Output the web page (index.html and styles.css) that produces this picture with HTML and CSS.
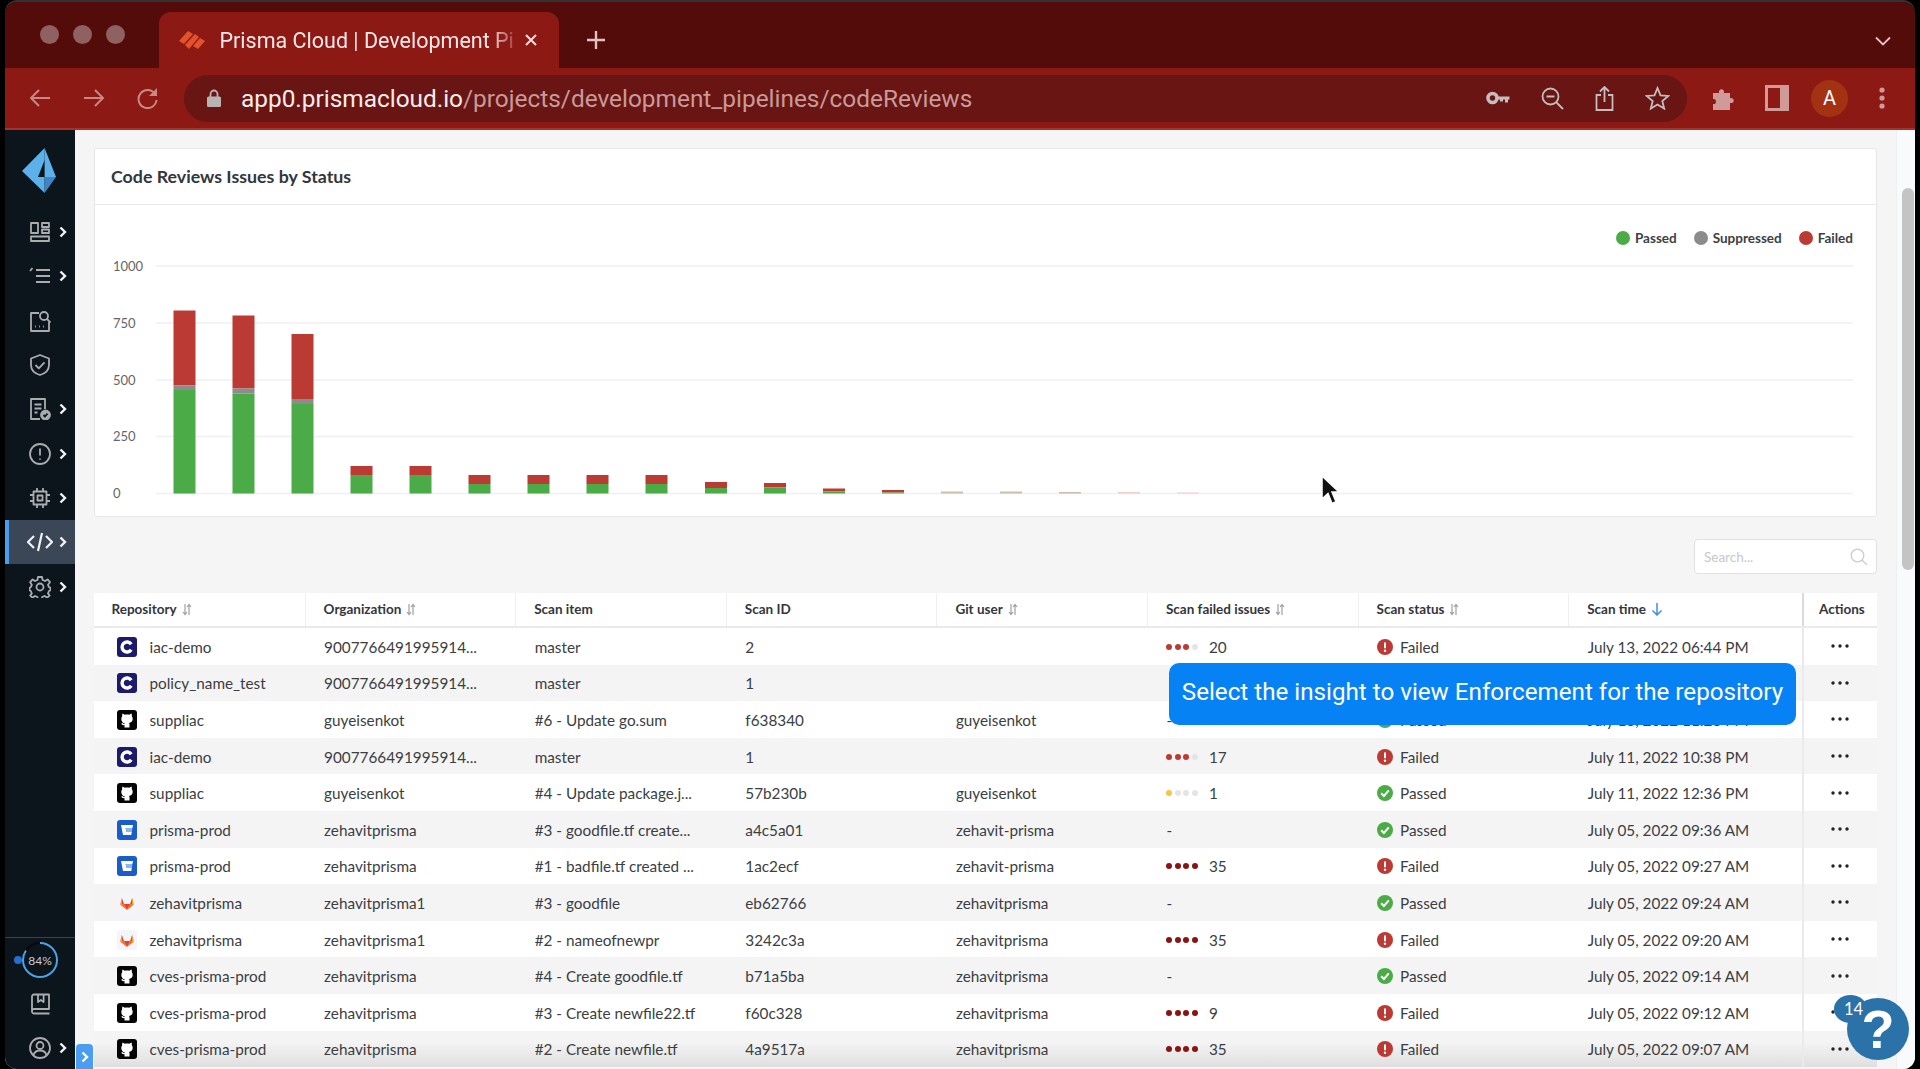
FILE: index.html
```html
<!DOCTYPE html>
<html lang="en">
<head>
  <meta charset="UTF-8" />
  <title>Prisma Cloud | Development Pipelines</title>
  <link rel="stylesheet" href="styles.css">
</head>
<body>
  <!-- shared icons -->
  <svg class="sprite" xmlns="http://www.w3.org/2000/svg">
    <symbol id="repo-c" viewBox="0 0 20 20">
      <rect width="20" height="20" rx="3" fill="#1d1a6c"/>
      <path d="M14.2 7.2a5 5 0 1 0 0 5.6" fill="none" stroke="#fff" stroke-width="3.4"/>
    </symbol>
    <symbol id="repo-gh" viewBox="0 0 20 20">
      <rect width="20" height="20" rx="3" fill="#050505"/>
      <path fill="#fff" d="M5.5 3.5l2.3 1.3c1.4-.4 3-.4 4.4 0l2.3-1.3c.4 1 .5 2 .3 2.8.6.7.9 1.5.9 2.5 0 2.6-1.6 3.9-3.7 4.2.4.4.5.9.5 1.5v3h-5v-2.400c-1.500.3-2.600-.2-3.200-1.600l1.400-.4c.4.7.9 1 1.800.8 0-.4.1-.7.3-.9C6 13.700 4.300 11.400 4.300 8.800c0-1 .3-1.800.9-2.500-.2-.8-.1-1.800.3-2.800z"/>
    </symbol>
    <symbol id="repo-bb" viewBox="0 0 20 20">
      <rect width="20" height="20" rx="3" fill="#1a5cc8"/>
      <path fill="#fff" d="M4 5h12l-.6 3H8.600l1 4h5.200l-.5 3H6z"/>
      <path fill="#8db8ee" d="M8.600 8h6.800l-.6 4H9.600z"/>
    </symbol>
    <symbol id="repo-gl" viewBox="0 0 20 20">
      <rect width="20" height="20" rx="3" fill="#f4f5fa"/>
      <path fill="#fca326" d="M3 11.500L4.800 5l2 6zM17 11.500L15.200 5l-2 6z"/>
      <path fill="#fc6d26" d="M3 11.500l7 5.500-3.200-6zM17 11.500l-7 5.500 3.200-6z"/>
      <path fill="#e24329" d="M10 17l-3.200-6h6.400zM4.800 5l2 6H5zM15.200 5l-2 6H15z"/>
    </symbol>
    <symbol id="st-fail" viewBox="0 0 16 16">
      <circle cx="8" cy="8" r="8" fill="#bb3a33"/>
      <rect x="7" y="3.200" width="2" height="6.300" rx="1" fill="#fff"/>
      <circle cx="8" cy="11.800" r="1.200" fill="#fff"/>
    </symbol>
    <symbol id="st-pass" viewBox="0 0 16 16">
      <circle cx="8" cy="8" r="8" fill="#4bab46"/>
      <path d="M4.200 8.300l2.700 2.700 4.900-5.600" fill="none" stroke="#fff" stroke-width="2"/>
    </symbol>
    <symbol id="sort" viewBox="0 0 10 13">
      <path d="M3 1v10M1 9l2 2.500L5 9M7 12V2M5 4l2-2.500L9 4" fill="none" stroke="#a0a0a0" stroke-width="1.200"/>
    </symbol>
    <symbol id="more" viewBox="0 0 18 4">
      <circle cx="2" cy="2" r="1.700" fill="#222"/><circle cx="9" cy="2" r="1.700" fill="#222"/><circle cx="16" cy="2" r="1.700" fill="#222"/>
    </symbol>
    <symbol id="chev" viewBox="0 0 8 12">
      <path d="M1.500 1.500L6 6l-4.500 4.500" fill="none" stroke="currentColor" stroke-width="2.400"/>
    </symbol>
  </svg>

  <div class="window">
    <!-- browser tab strip -->
    <div class="tabstrip">
      <div class="lights"><i></i><i></i><i></i></div>
      <div class="tab">
        <svg class="favicon" viewBox="0 0 28 20">
          <g fill="#e2532c"><path d="M1 11L10 1l5 3-9 10z"/><path d="M7 15L17 4l4 3-10 12z"/><path d="M15 16l7-8 5 3-7 8z"/></g>
        </svg>
        <span class="tab-title">Prisma Cloud | Development Pi</span>
        <svg class="tab-close" viewBox="0 0 14 14"><path d="M2 2l10 10M12 2L2 12" stroke="#f3dedd" stroke-width="2"/></svg>
      </div>
      <svg class="new-tab" viewBox="0 0 20 20"><path d="M10 1v18M1 10h18" stroke="#e3c3c1" stroke-width="2.400"/></svg>
      <svg class="tabs-menu" viewBox="0 0 16 10"><path d="M1 1.500l7 7 7-7" fill="none" stroke="#e3c3c1" stroke-width="1.800"/></svg>
    </div>

    <!-- browser toolbar -->
    <div class="toolbar">
      <svg class="nav-icon" viewBox="0 0 22 22"><path d="M21 11H2M10 3l-8 8 8 8" fill="none" stroke="#c98884" stroke-width="2"/></svg>
      <svg class="nav-icon" viewBox="0 0 22 22"><path d="M1 11h19M12 3l8 8-8 8" fill="none" stroke="#c98884" stroke-width="2"/></svg>
      <svg class="nav-icon" viewBox="0 0 22 22"><path d="M18 7a9 9 0 1 0 1.500 6" fill="none" stroke="#c98884" stroke-width="2"/><path d="M20 1v8h-8z" fill="#c98884"/></svg>
      <div class="omnibox">
        <svg class="lock" viewBox="0 0 14 18"><path d="M3.500 8V5a3.500 3.500 0 0 1 7 0v3" fill="none" stroke="#b9b3b2" stroke-width="1.800"/><rect y="7.500" width="14" height="10.500" rx="1.500" fill="#b9b3b2"/></svg>
        <span class="url"><b>app0.prismacloud.io</b>/projects/development_pipelines/codeReviews</span>
        <div class="omni-actions">
          <svg width="24" height="14" viewBox="0 0 24 14"><circle cx="6.500" cy="7" r="4.500" fill="none" stroke="#c4bdbc" stroke-width="3.600"/><path d="M11 5.500h12.500v3H22v3h-3v-3h-2v2h-3v-2h-3z" fill="#c4bdbc"/></svg>
          <svg width="23" height="23" viewBox="0 0 23 23"><circle cx="9.500" cy="9.500" r="8" fill="none" stroke="#c4bdbc" stroke-width="1.800"/><path d="M5.500 9.500h8M15.500 15.500l6.500 6.500" stroke="#c4bdbc" stroke-width="1.800"/></svg>
          <svg width="19" height="25" viewBox="0 0 19 25"><path d="M6 9H1.500v15h16V9H13M9.500 16V1.500M5 5.500l4.500-4.500L14 5.500" fill="none" stroke="#c4bdbc" stroke-width="1.800"/></svg>
          <svg width="25" height="24" viewBox="0 0 25 24"><path d="M12.500 2l3 7.300 7.800.6-6 5.100 1.900 7.600-6.700-4.100-6.700 4.100 1.900-7.600-6-5.100 7.800-.6z" fill="none" stroke="#c4bdbc" stroke-width="1.800"/></svg>
        </div>
      </div>
      <div class="ext-actions">
        <svg class="ext-puzzle" width="25" height="25" viewBox="0 0 25 25"><path fill="#cf9a97" d="M1 7h6c-1-5 6-5 5 0h6v5c5-1 5 6 0 5v7H1v-6c4 1 4-6 0-5z"/></svg>
        <svg class="ext-panel" width="24" height="26" viewBox="0 0 24 26"><path fill="#cf9a97" fill-rule="evenodd" d="M0 0h24v26H0zM3 3v20h12V3z"/></svg>
        <span class="avatar">A</span>
        <svg class="ext-menu" width="6" height="22" viewBox="0 0 6 22"><circle cx="3" cy="3" r="2.600" fill="#cf9a97"/><circle cx="3" cy="11" r="2.600" fill="#cf9a97"/><circle cx="3" cy="19" r="2.600" fill="#cf9a97"/></svg>
      </div>
    </div>

    <div class="main">
      <!-- left rail -->
      <nav class="rail">
        <svg class="logo" viewBox="0 0 34 45">
          <path fill="#5db1ea" d="M22.600 0L0 23l22.600 22V29H16l6.600-17z"/>
          <path fill="#5db1ea" d="M22.600 0L34 29H22.600z"/>
          <path fill="#3f86c0" d="M22.600 29H34L22.600 45z"/>
        </svg>
        <ul class="rail-list">
          <li class="rail-item">
            <svg viewBox="0 0 22 22" class="rail-icon"><path d="M2 2h7v10H2zM13 2h7v4h-7zM13 8.500h7v3.500h-7zM2 15.500h18V20H2z"/></svg>
            <svg class="rail-chev"><use href="#chev"/></svg>
          </li>
          <li class="rail-item">
            <svg viewBox="0 0 22 22" class="rail-icon"><path d="M7 5h14M7 11h14M7 17h14M1 6l2.500-3"/></svg>
            <svg class="rail-chev"><use href="#chev"/></svg>
          </li>
          <li class="rail-item">
            <svg viewBox="0 0 22 22" class="rail-icon"><path d="M10 3H2v18h18v-9M6 16.500h.8M10 16.500h.8M14 16.500h.8"/><circle cx="15" cy="6" r="4"/><path d="M18 9l3.500 3.500"/></svg>
          </li>
          <li class="rail-item">
            <svg viewBox="0 0 22 22" class="rail-icon"><path d="M11 1l9 3.500V11c0 5-4 8.500-9 10-5-1.500-9-5-9-10V4.500zM6.500 11l3.300 3.300 5.700-6"/></svg>
          </li>
          <li class="rail-item">
            <svg viewBox="0 0 22 22" class="rail-icon"><path d="M11 21H2V1h14v10M5.500 6.500h7M5.500 10.500h7M5.500 14.500h3"/><circle cx="16.500" cy="17" r="4.500" fill="#a9adb1"/><path d="M14.500 17l1.500 1.500 2.500-2.800" stroke="#0c141c"/></svg>
            <svg class="rail-chev"><use href="#chev"/></svg>
          </li>
          <li class="rail-item">
            <svg viewBox="0 0 22 22" class="rail-icon"><circle cx="11" cy="11" r="10"/><path d="M11 5.500v7M11 15.500v1.200"/></svg>
            <svg class="rail-chev"><use href="#chev"/></svg>
          </li>
          <li class="rail-item">
            <svg viewBox="0 0 22 22" class="rail-icon"><path d="M4.500 4.500h13v13h-13zM8.500 8.500h5v5h-5zM8 1v3M14 1v3M8 18v3M14 18v3M1 8h3M1 14h3M18 8h3M18 14h3"/></svg>
            <svg class="rail-chev"><use href="#chev"/></svg>
          </li>
          <li class="rail-item active">
            <svg viewBox="0 0 26 20" class="rail-icon code"><path d="M7 4l-6 6 6 6M19 4l6 6-6 6M15 1l-4 18"/></svg>
            <svg class="rail-chev"><use href="#chev"/></svg>
          </li>
          <li class="rail-item">
            <svg viewBox="0 0 22 22" class="rail-icon"><circle cx="11" cy="11" r="3.500"/><path d="M9 1h4l.6 3 2.400 1 2.600-1.600 2.400 2.800L19 8.800l1 2.400 1.500.6v2.400l-1.500.8-1 2.400 1.600 2.200-2.400 2-2.600-1.600-2.400 1-.6 2.500H9l-.6-2.500-2.400-1-2.600 1.600-2.200-2 1.600-2.200-1-2.400-1.300-.8v-2.400l1.300-.6 1-2.400L1.200 6.200 3.600 3.400 6 5l2.400-1z"/></svg>
            <svg class="rail-chev"><use href="#chev"/></svg>
          </li>
        </ul>
        <div class="rail-bottom">
          <div class="gauge">
            <i class="gauge-dot"></i>
            <svg width="38" height="38" viewBox="0 0 38 38">
              <circle cx="19" cy="19" r="17" fill="none" stroke="#05090d" stroke-width="2"/>
              <circle cx="19" cy="19" r="17" fill="none" stroke="#4aa3e4" stroke-width="2" stroke-dasharray="89.700 107" transform="rotate(-90 19 19)"/>
              <text x="19" y="23.500" text-anchor="middle" class="gauge-text">84%</text>
            </svg>
          </div>
          <div class="rail-item">
            <svg viewBox="0 0 22 22" class="rail-icon"><path d="M3 18V3.500A2 2 0 0 1 5 1.500h15V16H5a2 2 0 0 0-2 2 2 2 0 0 0 2 2.500h15.500M9 1.500V9l2.800-2 2.800 2V1.500"/></svg>
          </div>
          <div class="rail-item">
            <svg viewBox="0 0 22 22" class="rail-icon"><circle cx="11" cy="11" r="10"/><circle cx="11" cy="8.500" r="3.500"/><path d="M4.500 18c1-3.500 3.500-4.500 6.500-4.500s5.500 1 6.500 4.500"/></svg>
            <svg class="rail-chev"><use href="#chev"/></svg>
          </div>
        </div>
      </nav>
      <div class="rail-toggle"><svg><use href="#chev"/></svg></div>

      <!-- page content -->
      <div class="content">
        <section class="card">
          <h2 class="card-title">Code Reviews Issues by Status</h2>
          <div class="legend">
            <span class="legend-item"><i class="dot passed"></i>Passed</span>
            <span class="legend-item"><i class="dot suppressed"></i>Suppressed</span>
            <span class="legend-item"><i class="dot failed"></i>Failed</span>
          </div>
          <svg class="chart" width="1783" height="266" viewBox="94 250 1783 266">
            <g class="grid">
              <path d="M156 266H1853M156 323H1853M156 380H1853M156 436.500H1853M156 493.500H1853"/>
            </g>
            <g class="axis">
              <text x="113" y="271">1000</text>
              <text x="113" y="328">750</text>
              <text x="113" y="385">500</text>
              <text x="113" y="441">250</text>
              <text x="113" y="498">0</text>
            </g>
            <g class="bars-red">
              <rect x="173.500" y="310.500" width="22" height="75"/>
              <rect x="232.500" y="315.500" width="22" height="73"/>
              <rect x="291.500" y="334" width="22" height="65"/>
              <rect x="350.500" y="466" width="22" height="9"/>
              <rect x="409.500" y="466" width="22" height="9"/>
              <rect x="468.500" y="475" width="22" height="9"/>
              <rect x="527.500" y="475" width="22" height="9"/>
              <rect x="586.500" y="475" width="22" height="9"/>
              <rect x="645.500" y="475" width="22" height="9"/>
              <rect x="705" y="482" width="22" height="6"/>
              <rect x="764" y="483" width="22" height="4.500"/>
              <rect x="823" y="488.500" width="22" height="3"/>
              <rect x="882" y="490" width="22" height="2.500"/>
            </g>
            <g class="bars-gray">
              <rect x="173.500" y="385.500" width="22" height="4.500"/>
              <rect x="232.500" y="388.500" width="22" height="5"/>
              <rect x="291.500" y="399" width="22" height="5"/>
            </g>
            <g class="bars-green">
              <rect x="173.500" y="390" width="22" height="103.500"/>
              <rect x="232.500" y="393.500" width="22" height="100"/>
              <rect x="291.500" y="404" width="22" height="89.500"/>
              <rect x="350.500" y="475" width="22" height="18.500"/>
              <rect x="409.500" y="475" width="22" height="18.500"/>
              <rect x="468.500" y="484" width="22" height="9.500"/>
              <rect x="527.500" y="484" width="22" height="9.500"/>
              <rect x="586.500" y="484" width="22" height="9.500"/>
              <rect x="645.500" y="484" width="22" height="9.500"/>
              <rect x="705" y="488" width="22" height="5.500"/>
              <rect x="764" y="487.500" width="22" height="6"/>
              <rect x="823" y="491.500" width="22" height="2"/>
              <rect x="882" y="492.500" width="22" height="1"/>
            </g>
            <g class="bars-faint">
              <rect x="941" y="491.500" width="22" height="2"/>
              <rect x="1000" y="491.500" width="22" height="2"/>
              <rect x="1059" y="492" width="22" height="1.500"/>
              <rect class="pink" x="1118" y="492" width="22" height="1.500"/>
              <rect class="pink" x="1177" y="492.500" width="22" height="1"/>
            </g>
          </svg>
          <svg class="cursor" width="20" height="30" viewBox="0 0 20 30">
            <path d="M2 1v23l6-5.500 4 10 4-1.700-4-9.800h7z" fill="#111" stroke="#fff" stroke-width="1.500"/>
          </svg>
        </section>

        <div class="table-tools">
          <div class="search">
            <span class="search-text">Search...</span>
            <svg width="18" height="18" viewBox="0 0 18 18"><circle cx="7.500" cy="7.500" r="6.300" fill="none" stroke="#c8ccd0" stroke-width="1.300"/><path d="M12 12l5 5" stroke="#c8ccd0" stroke-width="1.300"/></svg>
          </div>
        </div>

        <div class="table">
          <div class="row head">
            <div class="cell first">Repository <svg class="sort"><use href="#sort"/></svg></div>
            <div class="cell">Organization <svg class="sort"><use href="#sort"/></svg></div>
            <div class="cell">Scan item</div>
            <div class="cell">Scan ID</div>
            <div class="cell">Git user <svg class="sort"><use href="#sort"/></svg></div>
            <div class="cell">Scan failed issues <svg class="sort"><use href="#sort"/></svg></div>
            <div class="cell">Scan status <svg class="sort"><use href="#sort"/></svg></div>
            <div class="cell">Scan time <svg class="sort-active" viewBox="0 0 12 14"><path d="M6 1v12M1.500 8.500L6 13l4.500-4.500" fill="none" stroke="#3d8fe6" stroke-width="1.500"/></svg></div>
            <div class="cell actions">Actions</div>
          </div>

          <div class="row">
            <div class="cell repo"><svg class="repo-icon"><use href="#repo-c"/></svg>iac-demo</div>
            <div class="cell">9007766491995914...</div>
            <div class="cell">master</div>
            <div class="cell">2</div>
            <div class="cell"></div>
            <div class="cell"><span class="sev"><i class="red"></i><i class="red"></i><i class="red"></i><i></i></span>20</div>
            <div class="cell"><svg class="st"><use href="#st-fail"/></svg>Failed</div>
            <div class="cell">July 13, 2022 06:44 PM</div>
            <div class="cell actions"><svg class="more"><use href="#more"/></svg></div>
          </div>
          <div class="row">
            <div class="cell repo"><svg class="repo-icon"><use href="#repo-c"/></svg>policy_name_test</div>
            <div class="cell">9007766491995914...</div>
            <div class="cell">master</div>
            <div class="cell">1</div>
            <div class="cell"></div>
            <div class="cell"></div>
            <div class="cell"></div>
            <div class="cell"></div>
            <div class="cell actions"><svg class="more"><use href="#more"/></svg></div>
          </div>
          <div class="row">
            <div class="cell repo"><svg class="repo-icon"><use href="#repo-gh"/></svg>suppliac</div>
            <div class="cell">guyeisenkot</div>
            <div class="cell">#6 - Update go.sum</div>
            <div class="cell">f638340</div>
            <div class="cell">guyeisenkot</div>
            <div class="cell">-</div>
            <div class="cell"><svg class="st"><use href="#st-pass"/></svg>Passed</div>
            <div class="cell">July 13, 2022 11:23 PM</div>
            <div class="cell actions"><svg class="more"><use href="#more"/></svg></div>
          </div>
          <div class="row">
            <div class="cell repo"><svg class="repo-icon"><use href="#repo-c"/></svg>iac-demo</div>
            <div class="cell">9007766491995914...</div>
            <div class="cell">master</div>
            <div class="cell">1</div>
            <div class="cell"></div>
            <div class="cell"><span class="sev"><i class="red"></i><i class="red"></i><i class="red"></i><i></i></span>17</div>
            <div class="cell"><svg class="st"><use href="#st-fail"/></svg>Failed</div>
            <div class="cell">July 11, 2022 10:38 PM</div>
            <div class="cell actions"><svg class="more"><use href="#more"/></svg></div>
          </div>
          <div class="row">
            <div class="cell repo"><svg class="repo-icon"><use href="#repo-gh"/></svg>suppliac</div>
            <div class="cell">guyeisenkot</div>
            <div class="cell">#4 - Update package.j...</div>
            <div class="cell">57b230b</div>
            <div class="cell">guyeisenkot</div>
            <div class="cell"><span class="sev"><i class="yellow"></i><i></i><i></i><i></i></span>1</div>
            <div class="cell"><svg class="st"><use href="#st-pass"/></svg>Passed</div>
            <div class="cell">July 11, 2022 12:36 PM</div>
            <div class="cell actions"><svg class="more"><use href="#more"/></svg></div>
          </div>
          <div class="row">
            <div class="cell repo"><svg class="repo-icon"><use href="#repo-bb"/></svg>prisma-prod</div>
            <div class="cell">zehavitprisma</div>
            <div class="cell">#3 - goodfile.tf create...</div>
            <div class="cell">a4c5a01</div>
            <div class="cell">zehavit-prisma</div>
            <div class="cell">-</div>
            <div class="cell"><svg class="st"><use href="#st-pass"/></svg>Passed</div>
            <div class="cell">July 05, 2022 09:36 AM</div>
            <div class="cell actions"><svg class="more"><use href="#more"/></svg></div>
          </div>
          <div class="row">
            <div class="cell repo"><svg class="repo-icon"><use href="#repo-bb"/></svg>prisma-prod</div>
            <div class="cell">zehavitprisma</div>
            <div class="cell">#1 - badfile.tf created ...</div>
            <div class="cell">1ac2ecf</div>
            <div class="cell">zehavit-prisma</div>
            <div class="cell"><span class="sev"><i class="dark"></i><i class="dark"></i><i class="dark"></i><i class="dark"></i></span>35</div>
            <div class="cell"><svg class="st"><use href="#st-fail"/></svg>Failed</div>
            <div class="cell">July 05, 2022 09:27 AM</div>
            <div class="cell actions"><svg class="more"><use href="#more"/></svg></div>
          </div>
          <div class="row">
            <div class="cell repo"><svg class="repo-icon"><use href="#repo-gl"/></svg>zehavitprisma</div>
            <div class="cell">zehavitprisma1</div>
            <div class="cell">#3 - goodfile</div>
            <div class="cell">eb62766</div>
            <div class="cell">zehavitprisma</div>
            <div class="cell">-</div>
            <div class="cell"><svg class="st"><use href="#st-pass"/></svg>Passed</div>
            <div class="cell">July 05, 2022 09:24 AM</div>
            <div class="cell actions"><svg class="more"><use href="#more"/></svg></div>
          </div>
          <div class="row">
            <div class="cell repo"><svg class="repo-icon"><use href="#repo-gl"/></svg>zehavitprisma</div>
            <div class="cell">zehavitprisma1</div>
            <div class="cell">#2 - nameofnewpr</div>
            <div class="cell">3242c3a</div>
            <div class="cell">zehavitprisma</div>
            <div class="cell"><span class="sev"><i class="dark"></i><i class="dark"></i><i class="dark"></i><i class="dark"></i></span>35</div>
            <div class="cell"><svg class="st"><use href="#st-fail"/></svg>Failed</div>
            <div class="cell">July 05, 2022 09:20 AM</div>
            <div class="cell actions"><svg class="more"><use href="#more"/></svg></div>
          </div>
          <div class="row">
            <div class="cell repo"><svg class="repo-icon"><use href="#repo-gh"/></svg>cves-prisma-prod</div>
            <div class="cell">zehavitprisma</div>
            <div class="cell">#4 - Create goodfile.tf</div>
            <div class="cell">b71a5ba</div>
            <div class="cell">zehavitprisma</div>
            <div class="cell">-</div>
            <div class="cell"><svg class="st"><use href="#st-pass"/></svg>Passed</div>
            <div class="cell">July 05, 2022 09:14 AM</div>
            <div class="cell actions"><svg class="more"><use href="#more"/></svg></div>
          </div>
          <div class="row">
            <div class="cell repo"><svg class="repo-icon"><use href="#repo-gh"/></svg>cves-prisma-prod</div>
            <div class="cell">zehavitprisma</div>
            <div class="cell">#3 - Create newfile22.tf</div>
            <div class="cell">f60c328</div>
            <div class="cell">zehavitprisma</div>
            <div class="cell"><span class="sev"><i class="dark"></i><i class="dark"></i><i class="dark"></i><i class="dark"></i></span>9</div>
            <div class="cell"><svg class="st"><use href="#st-fail"/></svg>Failed</div>
            <div class="cell">July 05, 2022 09:12 AM</div>
            <div class="cell actions"><svg class="more"><use href="#more"/></svg></div>
          </div>
          <div class="row last">
            <div class="cell repo"><svg class="repo-icon"><use href="#repo-gh"/></svg>cves-prisma-prod</div>
            <div class="cell">zehavitprisma</div>
            <div class="cell">#2 - Create newfile.tf</div>
            <div class="cell">4a9517a</div>
            <div class="cell">zehavitprisma</div>
            <div class="cell"><span class="sev"><i class="dark"></i><i class="dark"></i><i class="dark"></i><i class="dark"></i></span>35</div>
            <div class="cell"><svg class="st"><use href="#st-fail"/></svg>Failed</div>
            <div class="cell">July 05, 2022 09:07 AM</div>
            <div class="cell actions"><svg class="more"><use href="#more"/></svg></div>
          </div>

          <div class="tip">Select the insight to view Enforcement for the repository</div>
        </div>
      </div>

      <div class="scrollbar"><div class="thumb"></div></div>

      <div class="help">?</div>
      <div class="help-badge">14</div>
    </div>
  </div>
</body>
</html>
```

FILE: styles.css
```css
* {
  box-sizing: border-box;
  margin: 0;
  padding: 0;
}
html, body {
  height: 100%;
  overflow: hidden;
}
body {
  background: #000;
  font-family: Lato, "Liberation Sans", sans-serif;
  color: #3b3e42;
}
.sprite {
  display: none;
}
.window {
  margin: 2px 5px 0;
  height: 1067px;
  border-radius: 12px;
  overflow: hidden;
  display: flex;
  flex-direction: column;
  box-shadow: 0 -2px 0 #333;
}

/* ===== browser chrome ===== */
.tabstrip {
  height: 66px;
  flex: none;
  background: #540c0b;
  display: flex;
  align-items: flex-end;
  position: relative;
}
.lights {
  display: flex;
  gap: 14px;
  margin: 0 0 24px 35px;
  width: 118.5px;
}
.lights i {
  width: 19px;
  height: 19px;
  border-radius: 50%;
  background: #8f6160;
}
.tab {
  width: 400px;
  height: 56px;
  background: #8d1915;
  border-radius: 12px 12px 0 0;
  display: flex;
  align-items: center;
  padding-left: 19px;
}
.favicon {
  width: 28px;
  height: 20px;
  flex: none;
}
.tab-title {
  font: 21.5px Roboto, sans-serif;
  color: #f6e9e8;
  margin-left: 14px;
  width: 293px;
  white-space: nowrap;
  -webkit-mask-image: linear-gradient(to right, #000 92%, rgba(0, 0, 0, 0.25));
  mask-image: linear-gradient(to right, #000 92%, rgba(0, 0, 0, 0.25));
}
.tab-close {
  width: 14px;
  height: 14px;
  margin-left: 11px;
  flex: none;
}
.new-tab {
  width: 20px;
  height: 20px;
  margin: 0 0 18px 27px;
}
.tabs-menu {
  width: 16px;
  height: 10px;
  margin: 0 24px 22px auto;
}
.toolbar {
  height: 62px;
  flex: none;
  background: #8d1915;
  border-bottom: 2px solid #a5322d;
  display: flex;
  align-items: center;
  padding-left: 24px;
}
.nav-icon {
  width: 22px;
  height: 22px;
  margin-right: 32px;
  flex: none;
}
.omnibox {
  width: 1503px;
  height: 47px;
  margin-left: -7px;
  background: #681513;
  border-radius: 24px;
  display: flex;
  align-items: center;
  padding-left: 23px;
  flex: none;
}
.lock {
  width: 14px;
  height: 18px;
  flex: none;
}
.url {
  font: 24.4px Roboto, sans-serif;
  color: #c99a98;
  margin-left: 20px;
  white-space: nowrap;
}
.url b {
  font-weight: 400;
  color: #f6ecec;
}
.omni-actions {
  margin-left: auto;
  display: flex;
  align-items: center;
  gap: 31px;
  padding-right: 17px;
}
.ext-actions {
  display: flex;
  align-items: center;
  margin-left: 25px;
}
.ext-panel {
  margin-left: 28px;
}
.avatar {
  width: 37px;
  height: 37px;
  margin-left: 22px;
  border-radius: 50%;
  background: #a33212;
  color: #fff;
  font: 20px Roboto, sans-serif;
  display: flex;
  align-items: center;
  justify-content: center;
}
.ext-menu {
  margin-left: 31px;
}

/* ===== page ===== */
.main {
  flex: 1;
  display: flex;
  position: relative;
  min-height: 0;
  background: #f5f5f5;
}
.rail {
  width: 70px;
  flex: none;
  background: #0c141c;
  display: flex;
  flex-direction: column;
  color: #a9adb1;
}
.logo {
  width: 34px;
  height: 45px;
  margin: 18px 0 17px 17px;
  flex: none;
}
.rail-list {
  list-style: none;
}
.rail-item {
  height: 44.3px;
  display: flex;
  align-items: center;
  padding-left: 24px;
  position: relative;
}
.rail-item.active {
  background: #3b4757;
  border-left: 4px solid #4a9cf0;
  padding-left: 20px;
}
.rail-icon {
  width: 22px;
  height: 22px;
  flex: none;
  fill: none;
  stroke: #a9adb1;
  stroke-width: 1.8;
  stroke-linejoin: round;
}
.rail-icon.code {
  width: 26px;
  height: 20px;
  margin: 0 -2px;
  stroke: #f1f3f5;
  stroke-width: 2.2;
}
.rail-chev {
  width: 8px;
  height: 12px;
  margin-left: 8px;
  color: #f1f3f5;
}
.rail-bottom {
  margin-top: auto;
  border-top: 1px solid #3a424b;
  height: 132px;
  padding-top: 3px;
}
.gauge {
  display: flex;
  align-items: center;
  height: 38px;
  margin: 0 0 3px 16px;
  position: relative;
}
.gauge-dot {
  position: absolute;
  left: -7px;
  top: 15px;
  width: 8px;
  height: 8px;
  border-radius: 50%;
  background: #2470cf;
}
.gauge-text {
  font-size: 12px;
  fill: #c9cccf;
}
.rail-toggle {
  position: absolute;
  left: 71px;
  bottom: 0;
  width: 17px;
  height: 25px;
  background: #4a9df0;
  border-radius: 4px 4px 0 0;
  color: #fff;
  display: flex;
  align-items: center;
  justify-content: center;
}
.rail-toggle svg {
  width: 8px;
  height: 12px;
}
.content {
  flex: 1;
  min-width: 0;
  padding: 17.5px 19px 0;
  overflow: hidden;
}
.card {
  height: 369px;
  background: #fff;
  border: 1px solid #e8e8ea;
  border-radius: 3px;
  position: relative;
}
.card-title {
  height: 56px;
  line-height: 54px;
  padding-left: 16px;
  border-bottom: 1px solid #e8eaee;
  font-size: 17.8px;
  font-weight: 700;
  color: #33363a;
}
.legend {
  display: flex;
  justify-content: flex-end;
  align-items: center;
  height: 45px;
  padding: 22px 23px 0 0;
  gap: 17px;
  font-size: 13.5px;
  font-weight: 700;
  color: #3d4044;
}
.legend-item {
  display: flex;
  align-items: center;
  gap: 5px;
}
.dot {
  width: 14px;
  height: 14px;
  border-radius: 50%;
}
.dot.passed { background: #4bab46; }
.dot.suppressed { background: #8c8c8c; }
.dot.failed { background: #bb3a33; }
.chart {
  display: block;
  margin-left: -1px;
}
.grid path {
  stroke: #eff0f5;
  stroke-width: 1.5;
  fill: none;
}
.axis text {
  font-size: 13px;
  fill: #666;
}
.bars-red rect { fill: #bb3a33; }
.bars-gray rect { fill: #8c8c8c; }
.bars-green rect { fill: #4bab46; }
.bars-faint rect { fill: #b9a58c; opacity: 0.7; }
.bars-faint rect.pink { fill: #eebcb8; }
.cursor {
  position: absolute;
  left: 1225px;
  top: 326px;
}
.table-tools {
  display: flex;
  justify-content: flex-end;
  padding-top: 22.5px;
  height: 76px;
}
.search {
  width: 183px;
  height: 35px;
  background: #fff;
  border: 1px solid #e0e1e4;
  border-radius: 4px;
  display: flex;
  align-items: center;
  justify-content: space-between;
  padding: 0 8px 0 9px;
}
.search-text {
  font-size: 13.5px;
  color: #c6c8cc;
}

/* ===== table ===== */
.table {
  position: relative;
  font-size: 15.3px;
}
.row {
  display: grid;
  grid-template-columns: repeat(7, 210.6px) 233.8px 75px;
  height: 36.6px;
  background: #fff;
}
.row:nth-child(odd) {
  background: #f4f4f5;
}
.row.head {
  height: 35.5px;
  background: #fff;
  border-bottom: 2px solid #e9eaee;
  font-size: 13.5px;
  font-weight: 700;
  color: #33363a;
}
.row.last {
  background: linear-gradient(#f4f4f5 30%, #dfdfe0);
}
.cell {
  display: flex;
  align-items: center;
  padding: 1px 0 0 19.5px;
  white-space: nowrap;
  overflow: hidden;
}
.head .cell {
  padding: 0 0 0 18px;
  gap: 5px;
  border-left: 1px solid #eeeff1;
}
.head .cell.first {
  border-left: 0;
  padding-left: 17.5px;
}
.cell.repo {
  padding-left: 23px;
}
.repo-icon {
  width: 20px;
  height: 20px;
  margin-right: 12.5px;
  flex: none;
}
.cell.actions {
  padding: 0;
  justify-content: center;
  border-left: 2px solid #e9e9ee;
}
.head .cell.actions {
  padding: 0 0 0 3px;
  border-left: 2px solid #dadada;
}
.sort {
  width: 10px;
  height: 13px;
}
.sort-active {
  width: 12px;
  height: 14px;
}
.more {
  width: 18px;
  height: 4px;
}
.st {
  width: 16px;
  height: 16px;
  margin-right: 7px;
  flex: none;
}
.sev {
  display: flex;
  gap: 2.5px;
  margin-right: 11px;
}
.sev i {
  width: 6px;
  height: 6px;
  border-radius: 50%;
  background: #e4e4e6;
}
.sev i.red { background: #bb3a33; }
.sev i.dark { background: #8a1414; }
.sev i.yellow { background: #f5c63f; }
.tip {
  position: absolute;
  left: 1075px;
  top: 70.5px;
  width: 627px;
  height: 62px;
  padding-bottom: 4px;
  background: #0782f5;
  border-radius: 10px;
  color: #fff;
  font: 24.2px Roboto, sans-serif;
  display: flex;
  align-items: center;
  justify-content: center;
  white-space: nowrap;
}
.scrollbar {
  width: 19px;
  flex: none;
  background: #f9fafc;
  border-left: 1px solid #eeeff2;
  padding: 58px 1px 0 5px;
}
.thumb {
  height: 382px;
  background: #c4c4c4;
  border-radius: 6px;
}
.help {
  position: absolute;
  left: 1842px;
  top: 868px;
  width: 62px;
  height: 62px;
  border-radius: 50%;
  background: #2a72a8;
  color: #fff;
  font: 700 54px "Liberation Sans", sans-serif;
  display: flex;
  align-items: center;
  justify-content: center;
}
.help-badge {
  position: absolute;
  left: 1829px;
  top: 865px;
  width: 33px;
  height: 28px;
  padding-left: 6px;
  border-radius: 50%;
  background: #2a72a8;
  color: #fff;
  font-size: 16.5px;
  display: flex;
  align-items: center;
  justify-content: center;
}
```
